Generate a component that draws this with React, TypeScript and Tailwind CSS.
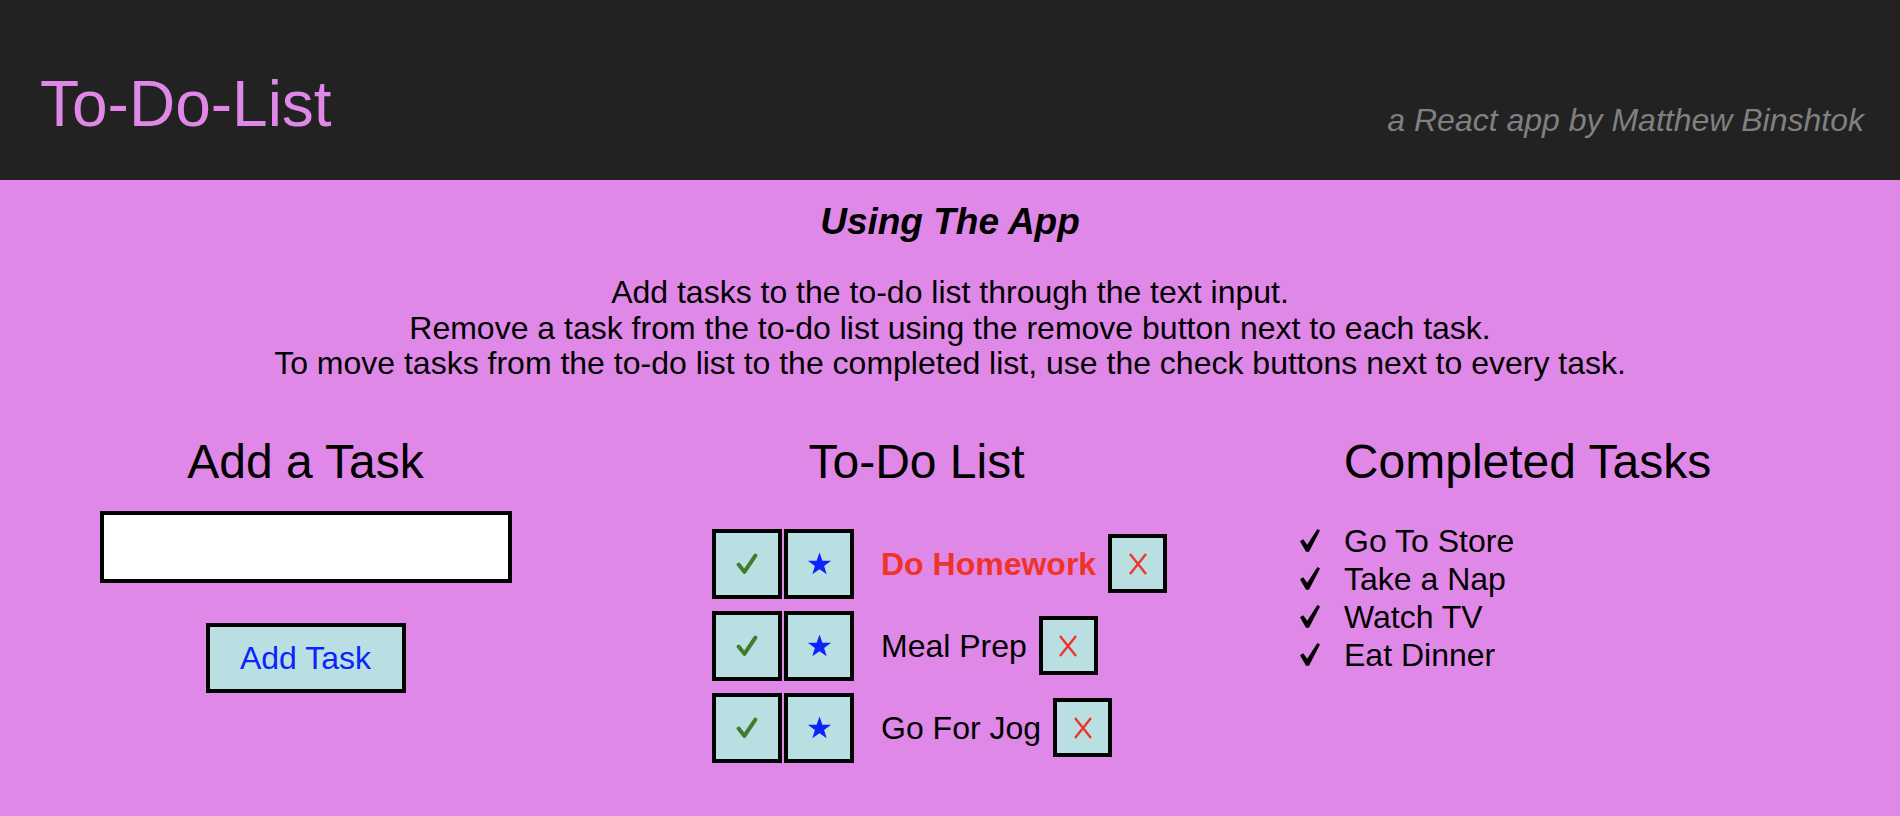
import React from "react";

const todos = [
  { name: "Do Homework", starred: true },
  { name: "Meal Prep", starred: false },
  { name: "Go For Jog", starred: false },
];

const completed = ["Go To Store", "Take a Nap", "Watch TV", "Eat Dinner"];

const GreenCheck = () => (
  <svg width="22" height="22" viewBox="0 0 21 21" fill="none">
    <path d="M2.5 11 L8 18 L18.5 2.5" stroke="#3f7d2c" strokeWidth="3.8" strokeLinecap="round" strokeLinejoin="round" />
  </svg>
);

const BlueStar = () => (
  <svg width="25" height="23" viewBox="0 0 24 23">
    <polygon
      points="12,0.5 14.9,8.8 23.6,8.8 16.6,14 19.2,22.3 12,17.3 4.8,22.3 7.4,14 0.4,8.8 9.1,8.8"
      fill="#0b24fb"
    />
  </svg>
);

const RedX = () => (
  <svg width="18" height="22" viewBox="0 0 18 22" fill="none">
    <path d="M1 1 L17 21 M17 1 L1 21" stroke="#ee3428" strokeWidth="2.4" />
  </svg>
);

const DoneCheck = () => (
  <svg width="20" height="23" viewBox="0 0 20 23">
    <polygon points="0,12.2 3.2,10.2 7.2,15.8 17.4,0 20,1.4 9,22.8 6,22.8" fill="#000" />
  </svg>
);

const Box = ({ children }: { children: React.ReactNode }) => (
  <button className="flex h-[70px] w-[70px] items-center justify-center border-4 border-black bg-[#b9dfe3]">
    {children}
  </button>
);

export default function App() {
  return (
    <div className="min-h-screen bg-[#e088e7] font-['Liberation_Sans',Arial,sans-serif] text-black">
      {/* header */}
      <header className="flex h-[180px] items-end justify-between bg-[#222222] pb-[44px] pl-[40px] pr-[36px]">
        <h1 className="text-[64px] leading-none text-[#e088e7]">To-Do-List</h1>
        <p className="text-[32px] italic leading-none text-[#808080]">a React app by Matthew Binshtok</p>
      </header>

      <main>
        <h3 className="mt-[23px] text-center text-[37px] font-bold italic leading-none">Using The App</h3>
        <p className="mt-[35px] text-center text-[32px] leading-[35.5px]">
          Add tasks to the to-do list through the text input.
          <br />
          Remove a task from the to-do list using the remove button next to each task.
          <br />
          To move tasks from the to-do list to the completed list, use the check buttons next to every task.
        </p>

        <div className="mt-[56px] grid w-[1833px] grid-cols-3">
          {/* LEFT COLUMN */}
          <div>
            <h2 className="text-center text-[48px] leading-none">Add a Task</h2>
            <input
              type="text"
              className="mx-auto mt-[25px] block h-[72px] w-[412px] border-4 border-black bg-white px-2 text-[32px] outline-none"
            />
            <button className="mx-auto mt-[40px] block h-[70px] w-[200px] border-4 border-black bg-[#b9dfe3] text-[32px] text-[#0b24fb]">
              Add Task
            </button>
          </div>

          {/* MIDDLE COLUMN */}
          <div>
            <h2 className="text-center text-[48px] leading-none">To-Do List</h2>
            <ul className="mt-[43px] flex flex-col gap-[12px] pl-[101px]">
              {todos.map((t) => (
                <li key={t.name} className="flex items-center">
                  <Box>
                    <GreenCheck />
                  </Box>
                  <div className="ml-[2px]">
                    <Box>
                      <BlueStar />
                    </Box>
                  </div>
                  <span
                    className={
                      t.starred
                        ? "ml-[27px] text-[32px] font-bold leading-none text-[#ee3428]"
                        : "ml-[27px] text-[32px] leading-none"
                    }
                  >
                    {t.name}
                  </span>
                  <button className="ml-[12px] flex h-[59px] w-[59px] items-center justify-center border-4 border-black bg-[#b9dfe3]">
                    <RedX />
                  </button>
                </li>
              ))}
            </ul>
          </div>

          {/* RIGHT COLUMN */}
          <div>
            <h2 className="text-center text-[48px] leading-none">Completed Tasks</h2>
            <ul className="mt-[36px] pl-[78px]">
              {completed.map((c) => (
                <li key={c} className="flex items-center text-[32px] leading-[38px]">
                  <DoneCheck />
                  <span className="ml-[24px]">{c}</span>
                </li>
              ))}
            </ul>
          </div>
        </div>
      </main>
    </div>
  );
}
